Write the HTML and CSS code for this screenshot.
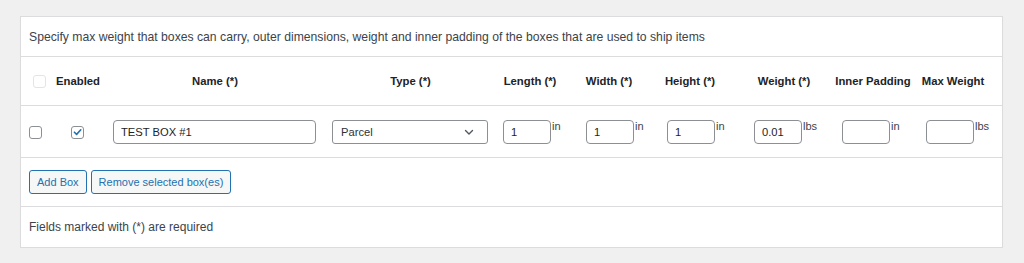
FILE: index.html
```html
<!DOCTYPE html>
<html lang="en">
<head>
  <meta charset="UTF-8">
  <title>Box Packing Settings</title>
  <link rel="stylesheet" href="styles.css">
</head>
<body>
  <div class="boxes-wrap">
    <table class="boxes">
      <colgroup>
        <col class="c-check">
        <col class="c-enabled">
        <col class="c-name">
        <col class="c-type">
        <col class="c-length">
        <col class="c-width">
        <col class="c-height">
        <col class="c-weight">
        <col class="c-padding">
        <col class="c-max">
      </colgroup>
      <thead>
        <tr class="desc-row">
          <td colspan="10">Specify max weight that boxes can carry, outer dimensions, weight and inner padding of the boxes that are used to ship items</td>
        </tr>
        <tr class="head-row">
          <th class="check-col"><span class="cb cb-head"></span></th>
          <th><span>Enabled</span></th>
          <th><span>Name (*)</span></th>
          <th><span>Type (*)</span></th>
          <th><span>Length (*)</span></th>
          <th><span>Width (*)</span></th>
          <th><span>Height (*)</span></th>
          <th><span>Weight (*)</span></th>
          <th><span>Inner Padding</span></th>
          <th><span>Max Weight</span></th>
        </tr>
      </thead>
      <tbody>
        <tr class="box-row">
          <td class="check-col"><span class="cb"></span></td>
          <td class="center"><span class="cb checked">
            <svg viewBox="0 0 12 12" width="12" height="12"><path d="M2.6 6.2l2.4 2.4 4.6-5" fill="none" stroke="#2271b1" stroke-width="1.7" stroke-linecap="round" stroke-linejoin="round"/></svg>
          </span></td>
          <td><input class="text name-input" type="text" value="TEST BOX #1"></td>
          <td>
            <div class="select">
              <span>Parcel</span>
              <svg viewBox="0 0 12 12" width="12" height="12"><path d="M2.5 4.5l3.5 3.5 3.5-3.5" fill="none" stroke="#50575e" stroke-width="1.4" stroke-linecap="round" stroke-linejoin="round"/></svg>
            </div>
          </td>
          <td class="dim-cell d-len"><span class="dim"><input class="text small" type="text" value="1"><span class="unit">in</span></span></td>
          <td class="dim-cell d-wid"><span class="dim"><input class="text small" type="text" value="1"><span class="unit">in</span></span></td>
          <td class="dim-cell d-hei"><span class="dim"><input class="text small" type="text" value="1"><span class="unit">in</span></span></td>
          <td class="dim-cell d-wei"><span class="dim"><input class="text small" type="text" value="0.01"><span class="unit">lbs</span></span></td>
          <td class="dim-cell d-pad"><span class="dim"><input class="text small" type="text" value=""><span class="unit">in</span></span></td>
          <td class="dim-cell d-max"><span class="dim"><input class="text small" type="text" value=""><span class="unit">lbs</span></span></td>
        </tr>
      </tbody>
      <tfoot>
        <tr class="btn-row">
          <td colspan="10">
            <div class="actions">
              <button class="btn">Add Box</button>
              <button class="btn">Remove selected box(es)</button>
            </div>
          </td>
        </tr>
        <tr class="note-row">
          <td colspan="10">Fields marked with (*) are required</td>
        </tr>
      </tfoot>
    </table>
  </div>
</body>
</html>
```

FILE: styles.css
```css
body {
  margin: 0;
  padding: 16px 21px 0 20px;
  background: #f0f0f1;
  font-family: 'Liberation Sans', Arial, sans-serif;
  font-size: 12px;
  color: #1d2327;
}

.boxes-wrap {
  background: #fff;
  border: 1px solid #dcdcde;
  box-shadow: 0 1px 1px rgba(0, 0, 0, 0.04);
}

.boxes {
  width: 100%;
  border-collapse: collapse;
  table-layout: fixed;
}

/* column widths tuned so header labels sit over their fields */
.c-check { width: 30px; }
.c-enabled { width: 54px; }
.c-name { width: 220px; }
.c-type { width: 171px; }
.c-length { width: 68px; }
.c-width { width: 90px; }
.c-height { width: 72px; }
.c-weight { width: 116px; }
.c-padding { width: 62px; }
.c-max { width: auto; }

.boxes td,
.boxes th {
  padding: 0 8px;
  vertical-align: middle;
}

.boxes tbody tr td,
.boxes tfoot tr td,
.head-row th {
  border-top: 1px solid #dcdcde;
}

.desc-row td {
  height: 39px;
  font-size: 12.2px;
  color: #3c434a;
}

.head-row th {
  height: 48px;
  padding: 0;
  font-size: 11.3px;
  font-weight: 700;
  color: #1d2327;
  white-space: nowrap;
}

.head-row th span {
  display: block;
  margin: 0 -20px;
  text-align: center;
}

.box-row td {
  height: 51px;
}

.btn-row td {
  height: 48px;
}

.note-row td {
  height: 40px;
  color: #3c434a;
}

.center {
  text-align: center;
}

.check-col {
  text-align: left;
  padding-left: 8px !important;
}

.cb {
  display: inline-flex;
  align-items: center;
  justify-content: center;
  box-sizing: border-box;
  width: 13px;
  height: 13px;
  border: 1px solid #8c8f94;
  border-radius: 3px;
  background: #fff;
  vertical-align: middle;
}

.head-row .cb-head {
  display: inline-flex;
  margin: 0 0 0 4px;
  border-color: #e4e4e6;
}

.cb.checked {
  margin-left: -2px;
}

.cb.checked svg {
  display: block;
}

.text {
  box-sizing: border-box;
  height: 24px;
  border: 1px solid #8c8f94;
  border-radius: 4px;
  padding: 0 7px;
  font-family: inherit;
  font-size: 11.2px;
  color: #1d2327;
  background: #fff;
}

.name-input {
  width: 203px;
  margin-left: 0;
}

.select {
  box-sizing: border-box;
  display: flex;
  align-items: center;
  justify-content: space-between;
  width: 156px;
  height: 24px;
  margin-left: -1px;
  padding: 0 12px 0 8px;
  border: 1px solid #8c8f94;
  border-radius: 3px;
  background: #fff;
  color: #2c3338;
  font-size: 11.2px;
}

.dim-cell {
  padding-right: 0 !important;
}

.d-len { padding-left: 7px !important; }
.d-wid { padding-left: 22px !important; }
.d-hei { padding-left: 13px !important; }
.d-wei { padding-left: 28px !important; }
.d-pad { padding-left: 0 !important; }
.d-max { padding-left: 22px !important; }

.dim {
  display: inline-flex;
  align-items: flex-start;
  vertical-align: middle;
}

.small {
  width: 48px;
}

.unit {
  margin-left: 1px;
  font-size: 11px;
  line-height: 13px;
  color: #3c434a;
}

.actions {
  display: flex;
  gap: 4px;
}

.btn {
  height: 24px;
  padding: 0 7px;
  border: 1px solid #2271b1;
  border-radius: 3px;
  background: #f6f7f7;
  color: #2271b1;
  font-family: inherit;
  font-size: 11px;
  cursor: pointer;
}
```
